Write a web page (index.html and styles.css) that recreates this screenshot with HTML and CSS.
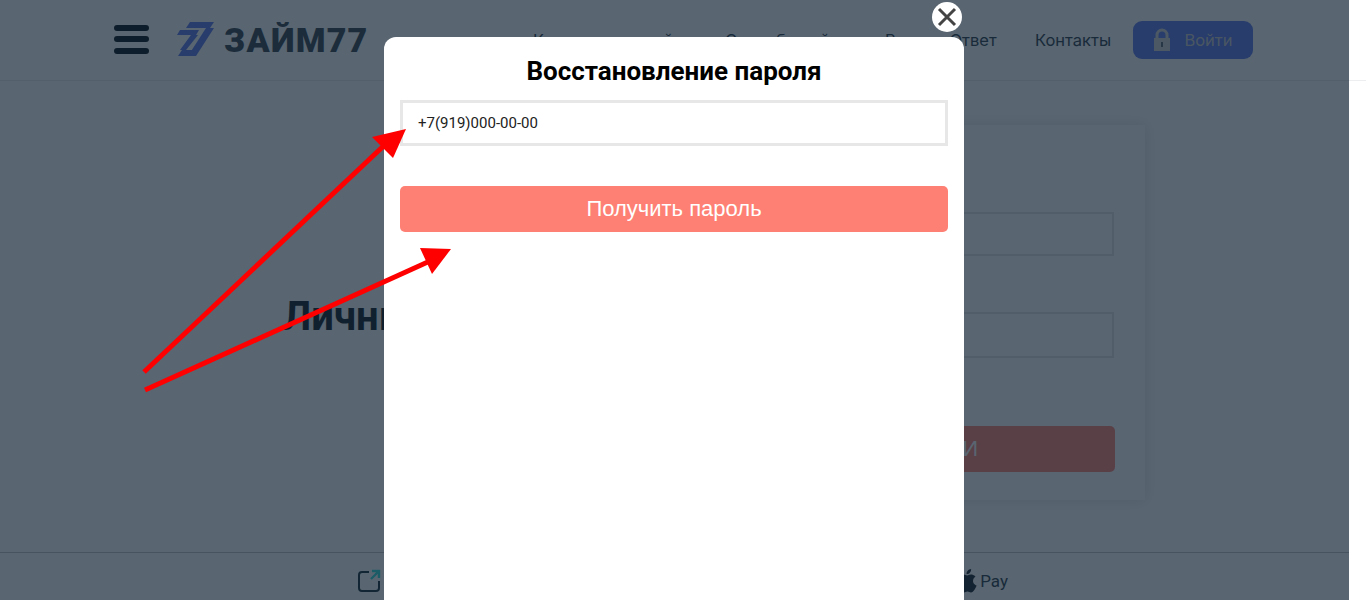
FILE: index.html
```html
<!DOCTYPE html>
<html lang="ru">
<head>
<meta charset="utf-8">
<title>Займ77</title>
<link rel="stylesheet" href="styles.css">
</head>
<body>
<div class="page">
  <header class="header">
    <div class="burger"><span></span><span></span><span></span></div>
    <div class="logo">
      <svg class="logo-mark" viewBox="0 0 37 34" width="37" height="34"><path d="M13 0H37L33 6H9Z M29 6H37L19 34H11Z M5 28H20L16 34H1Z M3 8H22L19 13H0Z M14 13H21L9 28H3Z" fill="#5b78f0"/></svg>
      <span class="logo-text">ЗАЙМ77</span>
    </div>
    <nav class="nav">
      <a class="nav-link">Как получить займ</a>
      <a class="nav-link">Способы займа</a>
      <a class="nav-link">Вопрос Ответ</a>
      <a class="nav-link">Контакты</a>
    </nav>
    <a class="login">
      <svg viewBox="0 0 18 24" width="18" height="24"><path d="M4 10V7a5 5 0 0 1 10 0v3" fill="none" stroke="#d4d7da" stroke-width="3"/><path d="M1 10H17V23H1Z" fill="#d4d7da"/><rect x="8" y="14" width="2" height="5" fill="#5a6570"/></svg>
      <span>Войти</span>
    </a>
  </header>
  <main class="main">
    <h1 class="main-title">Личный кабинет</h1>
    <div class="card">
      <div class="field field-login"></div>
      <div class="field field-pass"></div>
      <div class="submit">ВОЙТИ</div>
    </div>
  </main>
  <footer class="footer">
    <svg class="ext" viewBox="0 0 24 24" width="24" height="24"><path d="M12 3H5a3 3 0 0 0-3 3v13a3 3 0 0 0 3 3h14a3 3 0 0 0 3-3v-7" fill="none" stroke="#102a38" stroke-width="2"/><path d="M14 10 21 3M15 2H22V9" fill="none" stroke="#30e0e0" stroke-width="2.4"/></svg>
    <div class="pay">
      <svg viewBox="0 0 20 26" width="20" height="26"><path d="M15 13c0-3 2.300-4 2.500-4.200C16 6.800 14 6.500 13.200 6.500c-1.800-.2-3 1-4 1s-2.200-1-3.600-1C3.500 6.500 0 8.500 0 13.500c0 5 3.500 11 6 11 1.200 0 2-1 3.500-1s2.200 1 3.500 1c2.500 0 5-5 5.500-7-.5-.2-3.500-1.500-3.500-4.500ZM12 4.500c.8-1 1.300-2.200 1.100-3.500-1.200.1-2.600.8-3.400 1.800-.7.800-1.300 2.100-1.100 3.300 1.300.1 2.600-.6 3.400-1.600Z" fill="#16232e"/></svg>
      <span>Pay</span>
    </div>
  </footer>
</div>
<div class="overlay"></div>
<svg class="arrows" viewBox="0 0 1366 600" width="1366" height="600">
  <path d="M144 372 392 138" stroke="#fe0000" stroke-width="5" fill="none"/>
  <path d="M406 129 393 158 372 137Z" fill="#fe0000"/>
  <path d="M145 390 430 261" stroke="#fe0000" stroke-width="5" fill="none"/>
  <path d="M451 249 420 248 432 274Z" fill="#fe0000"/>
</svg>
<div class="modal">
  <button class="close"><svg viewBox="0 0 30 30" width="30" height="30"><path d="M7 7 23 23M23 7 7 23" stroke="#444" stroke-width="3"/></svg></button>
  <h2 class="modal-title">Восстановление пароля</h2>
  <div class="phone">+7(919)000-00-00</div>
  <div class="get">Получить пароль</div>
</div>
</body>
</html>
```
FILE: styles.css
```css
html, body { margin: 0; height: 600px; overflow: hidden; background: #fff; }
body { font-family: "Inter", "Liberation Sans", sans-serif; position: relative; width: 1366px; }
.page { width: 1366px; height: 600px; display: flex; flex-direction: column; background: #fff; }
.header { width: 1366px; height: 81px; box-sizing: border-box; display: flex; align-items: center; padding-left: 114px; border-bottom: 1px solid #eceef0; flex: none; }
.burger { width: 35px; height: 29px; display: flex; flex-direction: column; justify-content: space-between; margin-right: 28px; margin-top: -2px; flex: none; }
.burger span { height: 6px; border-radius: 3px; background: #05101a; }
.logo { display: flex; align-items: center; gap: 10px; width: 356px; flex: none; }
.logo-mark { margin-top: -3px; flex: none; }
.logo-text { font: 900 34px/1 "Roboto", sans-serif; color: #33424f; letter-spacing: 1.2px; white-space: nowrap; }
.nav { display: grid; grid-template-columns: 192px 160px 150px 98px; width: 600px; flex: none; font-size: 16.5px; color: #2a3a4a; white-space: nowrap; }
.nav-link { display: block; }
.login { width: 120px; height: 38px; box-sizing: border-box; flex: none; border-radius: 9px; background: #5b78f0; display: flex; align-items: center; justify-content: center; gap: 13px; color: #c9cdd0; font-size: 16.5px; }
.main { flex: 1; width: 1349px; display: flex; padding: 44px 204px 0 283px; box-sizing: border-box; }
.main-title { font: 700 40px/1 "Roboto", sans-serif; color: #0c1a24; margin: 172px 0 0; width: 400px; white-space: nowrap; flex: none; }
.card { margin-left: 62px; flex: 1; box-sizing: border-box; height: 375px; padding: 87px 30px 0 0; display: flex; flex-direction: column; align-items: flex-end; box-shadow: 0 0 14px rgba(0,0,0,.12); }
.field { width: 350px; border: 2px solid #e4e6e8; box-sizing: border-box; flex: none; margin-right: 1px; }
.field-login { height: 44px; margin-bottom: 56px; }
.field-pass { height: 46px; margin-bottom: 68px; }
.submit { width: 350px; height: 46px; flex: none; background: #fe8074; border-radius: 5px; color: #fff; font: 400 22px/46px "Liberation Sans", sans-serif; text-align: center; }
.footer { width: 1349px; height: 48px; box-sizing: border-box; flex: none; border-top: 1px solid #c2c6ca; display: flex; align-items: center; padding: 8px 341px 0 357px; justify-content: space-between; }
.pay { display: flex; align-items: center; gap: 2px; font: 400 17px "Roboto", sans-serif; color: #2a3a4a; }
.overlay { position: absolute; left: 0; top: 0; width: 1349px; height: 600px; background: rgba(19,35,51,.7); }
.arrows { position: absolute; left: 0; top: 0; z-index: 3; pointer-events: none; }
.modal { position: absolute; left: 384px; top: 37px; width: 580px; height: 563px; box-sizing: border-box; padding: 20px 16px 0; background: #fff; border-radius: 12px 12px 0 0; z-index: 2; }
.close { position: absolute; right: 2px; top: -35px; width: 30px; height: 30px; padding: 0; border: 0; border-radius: 50%; background: #fff; display: flex; }
.modal-title { margin: 0 0 14px; text-align: center; font: 700 26px/29px "Roboto", sans-serif; color: #000; }
.phone { height: 46px; box-sizing: border-box; border: 3px solid #e7e7e7; padding-left: 15px; font: 400 15px/40px "Roboto", sans-serif; color: #222; }
.get { margin-top: 40px; height: 46px; border-radius: 5px; background: #fe8074; color: #fff; font: 400 22px/46px "Liberation Sans", sans-serif; text-align: center; }
```
